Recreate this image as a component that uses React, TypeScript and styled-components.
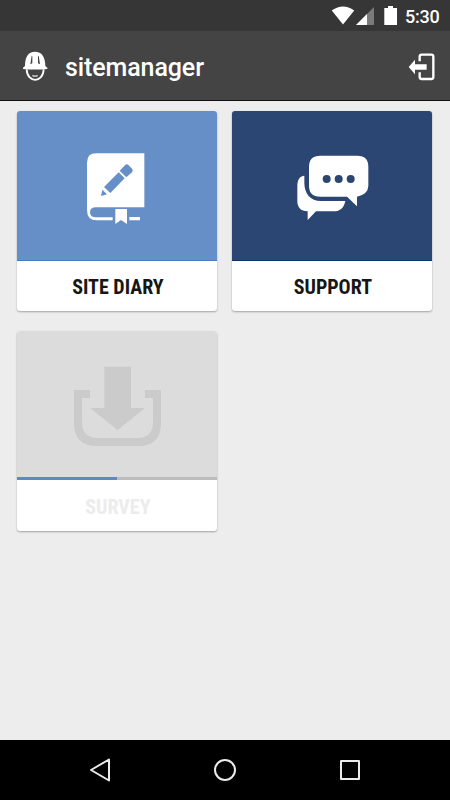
import React from "react";
import styled, { createGlobalStyle } from "styled-components";

const GlobalStyle = createGlobalStyle`
  * { box-sizing: border-box; }
  body { margin: 0; background: #ededed; }
`;

const Screen = styled.div`
  width: 450px;
  height: 800px;
  display: flex;
  flex-direction: column;
  background: #ededed;
  font-family: Roboto, sans-serif;
  overflow: hidden;
`;

const StatusBar = styled.div`
  height: 31px;
  flex: none;
  display: flex;
  justify-content: flex-end;
  align-items: center;
  padding-right: 9px;
  background: #363636;
  color: #fff;
`;

const StatusIcons = styled.svg`
  width: 72px;
  height: 31px;
  display: block;
`;

const Clock = styled.span`
  width: 37px;
  padding: 2px 0 0 1px;
  font-size: 18px;
  font-weight: 500;
  line-height: 31px;
  letter-spacing: -0.2px;
`;

const AppBar = styled.header`
  height: 70px;
  flex: none;
  display: flex;
  align-items: center;
  padding: 2px 13px 0 20px;
  background: #444;
  border-bottom: 1px solid #111;
  color: #fff;
`;

const HelmetIcon = styled.svg`
  width: 30px;
  height: 34px;
  flex: none;
  margin-top: -2px;
`;

const ExitIcon = styled.svg`
  width: 30px;
  height: 30px;
  flex: none;
`;

const Title = styled.h1`
  margin: 2px 0 0 15px;
  flex: 1;
  font-size: 25px;
  font-weight: 500;
  line-height: 34px;
  letter-spacing: -0.1px;
`;

const Grid = styled.main`
  flex: 1;
  display: grid;
  grid-template-columns: 200px 200px;
  grid-auto-rows: 200px;
  gap: 20px 15px;
  padding: 10px 17.4px;
`;

const Card = styled.section`
  display: flex;
  flex-direction: column;
  border-radius: 3px;
  overflow: hidden;
  background: #fff;
  box-shadow: 0 1px 2px rgba(0, 0, 0, 0.32);
`;

const Cover = styled.div<{ $color: string; $edge?: string; $height: number }>`
  height: ${(p) => p.$height}px;
  flex: none;
  display: flex;
  align-items: center;
  justify-content: center;
  background: ${(p) => p.$color};
  box-shadow: ${(p) => (p.$edge ? `inset 0 -1px ${p.$edge}` : "none")};
`;

const CoverIcon = styled.svg<{ $w: number; $h: number }>`
  width: ${(p) => p.$w}px;
  height: ${(p) => p.$h}px;
`;

const Progress = styled.div`
  height: 3px;
  flex: none;
  background: #bcbcbc;
`;

const ProgressFill = styled.div`
  height: 3px;
  background: #5f87c4;
`;

const Label = styled.div<{ $muted?: boolean }>`
  flex: 1;
  display: flex;
  align-items: center;
  justify-content: center;
  padding: 2px 0 0 1px;
  font-family: "Roboto Condensed", Roboto, sans-serif;
  font-stretch: 75%;
  font-size: 20px;
  font-weight: 700;
  color: ${(p) => (p.$muted ? "#ececec" : "#161616")};
`;

const NavBar = styled.nav`
  height: 60px;
  flex: none;
  display: flex;
  align-items: center;
  justify-content: space-between;
  padding: 0 85px;
  background: #000;
`;

const NavIcon = styled.svg`
  width: 30px;
  height: 30px;
  fill: none;
  stroke: #ebebeb;
  stroke-width: 2;
  stroke-linejoin: round;
`;

const Book = () => (
  <CoverIcon $w={90} $h={90} viewBox="6 3 270 270" fill="#fff">
    <path
      fillRule="evenodd"
      d="M78 40H223V202H78Q60 202 60 217Q60 232 78 232H128V241H80Q51 241 51 210V68Q51 40 78 40Z"
    />
    <path d="M136 207H171V252L153 240L136 252Z" />
    <path d="M178 231H210V241H178Z" />
    <g fill="#678fc7">
      <path d="M146 97L164 115L121 159L102 141Z" />
      <path d="M149 92L165 76Q170 70 176 76L186 86Q191 91 186 97L169 112Z" />
      <path d="M97 149L111 163L93 168Z" />
    </g>
  </CoverIcon>
);

const Chat = () => (
  <CoverIcon $w={90} $h={90} viewBox="6 3 270 270" fill="#fff">
    <path d="M58 107V128C58 160 76 183 108 183H181C177 203 166 214 146 214H93L68 240V214C47 214 37 202 37 184V138C37 120 44 108 58 107Z" />
    <path d="M106 47H217Q250 47 250 80V137Q250 162 216 170V199L186 170H106Q72 170 72 137V80Q72 47 106 47Z" />
    <g fill="#2b4673">
      <circle cx="125" cy="117" r="12" />
      <circle cx="161" cy="117" r="12" />
      <circle cx="197" cy="117" r="12" />
    </g>
  </CoverIcon>
);

const Download = () => (
  <CoverIcon $w={120} $h={110} viewBox="-9 -3 360 330" fill="#cbcbcb">
    <path d="M133 50H213V174H255L173 240L90 174H133Z" />
    <path d="M42 120H90V144H66V216Q66 264 114 264H231Q279 264 279 216V144H255V120H303V219Q303 288 234 288H111Q42 288 42 219Z" />
  </CoverIcon>
);

export default function App() {
  return (
    <Screen>
      <GlobalStyle />
      <StatusBar>
        <StatusIcons viewBox="332 0 72 31" fill="#fff">
          <path d="M331.8 10.5Q343 2.5 354.2 10.5L343 24.5Z" />
          <path d="M374 7V25H356Z" fill="#7b7b7b" />
          <path d="M367 14V25H356Z" />
          <path d="M388 6H393V8H397V25H384.3V8H388Z" />
        </StatusIcons>
        <Clock>5:30</Clock>
      </StatusBar>

      <AppBar>
        <HelmetIcon viewBox="60 147 90 102">
          <path
            d="M75 198C75 170 85 155 105 155S136 170 136 198L142 203V207Q105 210 69 207V203Z"
            fill="#fff"
          />
          <path d="M95 167L97 169V190L91 193ZM116 167L114 169V190L120 193Z" fill="#444" />
          <path d="M80 208C81 250 130 250 131 208" fill="none" stroke="#fff" strokeWidth="5.5" />
          <path d="M97 227Q105 230 113 227" fill="none" stroke="#ddd" strokeWidth="3.5" />
        </HelmetIcon>
        <Title>sitemanager</Title>
        <ExitIcon viewBox="321 154 90 90">
          <path
            d="M359 182V168Q359 162 365 162H394Q400 162 400 168V229Q400 235 394 235H365Q359 235 359 229V215"
            fill="none"
            stroke="#fff"
            strokeWidth="7"
          />
          <path d="M326 199L345 177V191H380V207H345V221Z" fill="#fff" />
        </ExitIcon>
      </AppBar>

      <Grid>
        <Card>
          <Cover $color="#678fc7" $edge="#4a7bc2" $height={150}>
            <Book />
          </Cover>
          <Label>SITE DIARY</Label>
        </Card>
        <Card>
          <Cover $color="#2b4673" $edge="#0b2f6d" $height={150}>
            <Chat />
          </Cover>
          <Label>SUPPORT</Label>
        </Card>
        <Card>
          <Cover $color="#dcdcdc" $height={146}>
            <Download />
          </Cover>
          <Progress>
            <ProgressFill style={{ width: "50%" }} />
          </Progress>
          <Label $muted>SURVEY</Label>
        </Card>
      </Grid>

      <NavBar>
        <NavIcon viewBox="0 0 30 30">
          <path d="M6 15L24 4.5V25.5Z" />
        </NavIcon>
        <NavIcon viewBox="0 0 30 30">
          <circle cx="15" cy="15" r="10" />
        </NavIcon>
        <NavIcon viewBox="0 0 30 30">
          <rect x="6" y="6" width="18" height="18" />
        </NavIcon>
      </NavBar>
    </Screen>
  );
}
